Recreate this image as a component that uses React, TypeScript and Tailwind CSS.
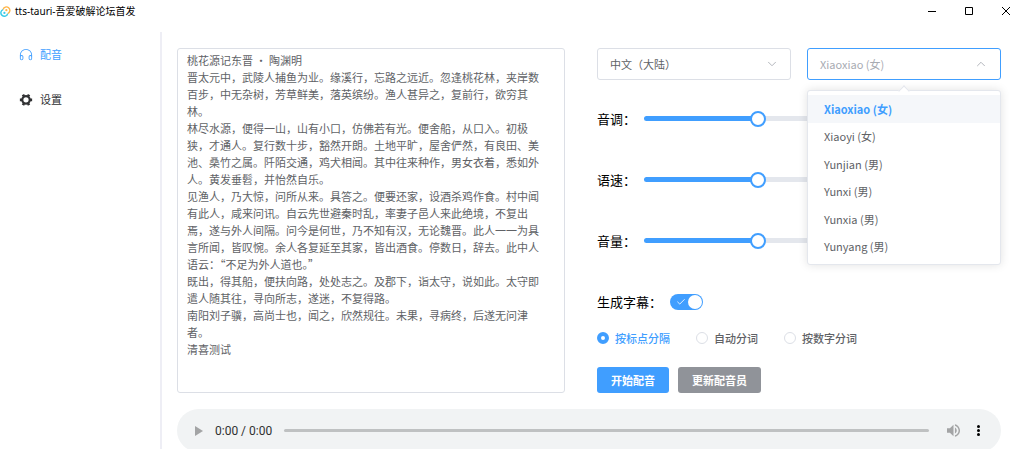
import { useState } from 'react';
import { Check, ChevronDown, ChevronUp } from 'lucide-react';

const article = `桃花源记东晋 · 陶渊明
晋太元中，武陵人捕鱼为业。缘溪行，忘路之远近。忽逢桃花林，夹岸数百步，中无杂树，芳草鲜美，落英缤纷。渔人甚异之，复前行，欲穷其林。
林尽水源，便得一山，山有小口，仿佛若有光。便舍船，从口入。初极狭，才通人。复行数十步，豁然开朗。土地平旷，屋舍俨然，有良田、美池、桑竹之属。阡陌交通，鸡犬相闻。其中往来种作，男女衣着，悉如外人。黄发垂髫，并怡然自乐。
见渔人，乃大惊，问所从来。具答之。便要还家，设酒杀鸡作食。村中闻有此人，咸来问讯。自云先世避秦时乱，率妻子邑人来此绝境，不复出焉，遂与外人间隔。问今是何世，乃不知有汉，无论魏晋。此人一一为具言所闻，皆叹惋。余人各复延至其家，皆出酒食。停数日，辞去。此中人语云：“不足为外人道也。”
既出，得其船，便扶向路，处处志之。及郡下，诣太守，说如此。太守即遣人随其往，寻向所志，遂迷，不复得路。
南阳刘子骥，高尚士也，闻之，欣然规往。未果，寻病终，后遂无问津者。
清喜测试`;

const voices = ['Xiaoxiao (女)', 'Xiaoyi (女)', 'Yunjian (男)', 'Yunxi (男)', 'Yunxia (男)', 'Yunyang (男)'];

const splitModes = ['按标点分隔', '自动分词', '按数字分词'];

const sliders = [
  { id: 'pitch', label: '音调：' },
  { id: 'rate', label: '语速：' },
  { id: 'volume', label: '音量：' },
];

function TauriLogo() {
  return (
    <svg viewBox="0 0 20 20" className="size-[11px]" fill="none">
      <path d="M5.5 6.5A6.3 6.3 0 1 1 14 13.8" stroke="#ffb547" strokeWidth="2.6" />
      <path d="M14 13.8A6.3 6.3 0 1 1 5.5 6.5" stroke="#3ccbe6" strokeWidth="2.6" />
      <circle cx="11.6" cy="7.6" r="2" fill="#ffb547" />
      <circle cx="8" cy="12.6" r="2" fill="#3ccbe6" />
    </svg>
  );
}

function HeadsetIcon() {
  return (
    <svg viewBox="0 0 1024 1024" className="size-[14px]" fill="currentColor">
      <path d="M896 529.152V512a384 384 0 1 0-768 0v17.152A128 128 0 0 1 320 640v128a128 128 0 1 1-256 0V512a448 448 0 1 1 896 0v256a128 128 0 1 1-256 0V640a128 128 0 0 1 192-110.848M896 640a64 64 0 0 0-128 0v128a64 64 0 0 0 128 0zm-768 0v128a64 64 0 0 0 128 0V640a64 64 0 1 0-128 0" />
    </svg>
  );
}

function ToolsIcon() {
  return (
    <svg viewBox="0 0 1024 1024" className="size-[14px]" fill="currentColor">
      <path d="M764.416 254.72a351.68 351.68 0 0 1 86.336 149.184H960v192.064H850.752a351.68 351.68 0 0 1-86.336 149.312l54.72 94.72-166.272 96-54.592-94.72a352.64 352.64 0 0 1-172.48 0L371.136 936l-166.272-96 54.72-94.72a351.68 351.68 0 0 1-86.336-149.312H64v-192h109.248a351.68 351.68 0 0 1 86.336-149.312L204.8 160l166.208-96h.192l54.656 94.592a352.64 352.64 0 0 1 172.48 0L652.8 64h.128L819.2 160l-54.72 94.72zM704 499.968a192 192 0 1 0-384 0 192 192 0 0 0 384 0" />
    </svg>
  );
}

function TitleBar() {
  return (
    <header className="flex h-8 shrink-0 items-start justify-between text-black">
      <div className="flex h-[22px] items-center gap-1">
        <TauriLogo />
        <h1 className="font-['Noto_Sans','Noto_Sans_CJK_SC',sans-serif] text-[10px]">tts-tauri-吾爱破解论坛首发</h1>
      </div>
      <div className="flex">
        <button aria-label="最小化" className="flex h-[22px] w-[37px] items-center justify-center">
          <svg viewBox="0 0 8 8" className="size-2" stroke="currentColor"><path d="M0 4.5h8" /></svg>
        </button>
        <button aria-label="最大化" className="flex h-[22px] w-[37px] items-center justify-center">
          <svg viewBox="0 0 8 8" className="size-2" stroke="currentColor" fill="none"><path d="M.5.5h7v7h-7z" /></svg>
        </button>
        <button aria-label="关闭" className="flex h-[22px] w-[37px] items-center justify-center">
          <svg viewBox="0 0 8 8" className="size-2" stroke="currentColor"><path d="M0 0l8 8M8 0L0 8" /></svg>
        </button>
      </div>
    </header>
  );
}

function Slider({ id, label }: { id: string; label: string }) {
  const [value, setValue] = useState(50);
  return (
    <div className="flex h-[61px] items-center gap-2">
      <label htmlFor={id} className="shrink-0 text-[13px] text-black">{label}</label>
      <input
        id={id}
        type="range"
        value={value}
        onChange={(e) => setValue(Number(e.target.value))}
        className="h-[5px] w-full max-w-[228px] appearance-none rounded-full [&::-webkit-slider-thumb]:size-4 [&::-webkit-slider-thumb]:appearance-none [&::-webkit-slider-thumb]:rounded-full [&::-webkit-slider-thumb]:border-2 [&::-webkit-slider-thumb]:border-[#409eff] [&::-webkit-slider-thumb]:bg-white"
        style={{ background: `linear-gradient(to right, #409eff ${value}%, #e4e7ed ${value}%)` }}
      />
    </div>
  );
}

function VoiceSelect() {
  const [voice, setVoice] = useState(voices[0]);
  return (
    <div className="relative">
      <button
        aria-haspopup="listbox"
        aria-expanded="true"
        aria-label="配音员"
        className="flex h-8 w-full items-center justify-between rounded-[3px] border border-[#409eff] px-3 text-[11px] text-[#a8abb2]"
      >
        {voice}
        <ChevronUp className="size-3.5 text-[#a8abb2]" strokeWidth={1.5} />
      </button>
      <div className="absolute top-[42px] left-0 z-10 w-full rounded-[3px] border border-[#e4e7ed] bg-white shadow-[0_0_10px_rgba(0,0,0,0.12)]">
        <span className="absolute -top-1 left-1/2 size-2 -translate-x-1/2 rotate-45 border-t border-l border-[#e4e7ed] bg-white" />
        <ul role="listbox" aria-label="配音员" className="relative grid min-h-[173px] grid-rows-6 py-1">
          {voices.map((v) => (
            <li
              key={v}
              role="option"
              aria-selected={v === voice}
              onClick={() => setVoice(v)}
              className={`flex items-center px-4 text-[11px] ${v === voice ? 'bg-[#f5f7fa] font-bold text-[#409eff]' : 'text-[#606266]'}`}
            >
              {v}
            </li>
          ))}
        </ul>
      </div>
    </div>
  );
}

function Player() {
  return (
    <div className="mt-4 flex h-[43px] shrink-0 items-center rounded-full bg-[#f1f3f4] pr-4 pl-[18px]">
      <button aria-label="播放" className="text-[#a3a4a5]">
        <svg viewBox="0 0 8 10" className="h-[10px] w-2" fill="currentColor"><path d="M0 0l8 5-8 5z" /></svg>
      </button>
      <span className="ml-3 font-[Roboto,sans-serif] text-[12px] text-[#2f3030]">0:00 / 0:00</span>
      <div className="mx-3 h-[3px] flex-1 rounded-full bg-[#bfc1c2]" />
      <button aria-label="静音" className="ml-1.5 text-[#a3a4a5]">
        <svg viewBox="3 3 18 18" className="size-[13px]" fill="currentColor">
          <path d="M3 9v6h4l5 5V4L7 9H3zm13.5 3c0-1.77-1.02-3.29-2.5-4.03v8.05c1.48-.73 2.5-2.25 2.5-4.02zM14 3.23v2.06c2.89.86 5 3.54 5 6.71s-2.11 5.85-5 6.71v2.06c4.01-.91 7-4.49 7-8.77s-2.99-7.86-7-8.77z" />
        </svg>
      </button>
      <button aria-label="更多选项" className="ml-3 text-black">
        <svg viewBox="0 0 13 13" className="size-[13px]" fill="currentColor">
          <circle cx="6.5" cy="2.5" r="1.5" />
          <circle cx="6.5" cy="6.5" r="1.5" />
          <circle cx="6.5" cy="10.5" r="1.5" />
        </svg>
      </button>
    </div>
  );
}

export default function App() {
  const [mode, setMode] = useState(splitModes[0]);

  return (
    <div lang="zh-CN" className="flex h-screen flex-col overflow-hidden bg-white font-['Noto_Sans_CJK_SC',sans-serif] text-[#303133]">
      <TitleBar />

      <div className="flex min-h-0 flex-1">
        {/* Sidebar */}
        <nav className="w-[162px] shrink-0 border-r-2 border-[#eeeef5] text-[11px]">
          <a href="#dub" className="flex h-[45px] items-center gap-[7px] pl-[19px] text-[#409eff]">
            <HeadsetIcon />
            配音
          </a>
          <a href="#settings" className="flex h-[45px] items-center gap-[7px] pl-[19px]">
            <ToolsIcon />
            设置
          </a>
        </nav>

        <main className="flex min-w-0 flex-1 flex-col pt-4 pr-[23px] pl-[15px]">
          <div className="grid shrink-0 grid-cols-[97fr_101fr] gap-8">
            <textarea
              aria-label="配音文本"
              defaultValue={article}
              spellCheck={false}
              className="resize-none overflow-hidden rounded-[3px] border border-[#dcdfe6] pt-[3px] pr-6 pl-[9px] text-[11px] leading-[17px] text-[#606266]"
            />

            <div>
              <div className="grid grid-cols-2 gap-4">
                <div className="relative">
                  <select
                    aria-label="语言"
                    className="h-8 w-full appearance-none rounded-[3px] border border-[#dcdfe6] px-3 text-[11px] text-[#606266]"
                  >
                    <option>中文（大陆）</option>
                  </select>
                  <ChevronDown className="pointer-events-none absolute top-[9px] right-3 size-3.5 text-[#a8abb2]" strokeWidth={1.5} />
                </div>
                <VoiceSelect />
              </div>

              {/* Voice settings */}
              <div className="mt-2">
                {sliders.map((s) => (
                  <Slider key={s.id} {...s} />
                ))}
                <label className="flex h-[61px] items-center gap-2 text-[13px] text-black">
                  生成字幕：
                  <span className="relative flex">
                    <input
                      type="checkbox"
                      role="switch"
                      defaultChecked
                      className="peer h-4 w-[33px] appearance-none rounded-full bg-[#dcdfe6] checked:bg-[#409eff]"
                    />
                    <Check className="pointer-events-none absolute top-[3px] left-1.5 size-2.5 text-white" strokeWidth={2} />
                    <span className="pointer-events-none absolute top-px left-px size-3.5 rounded-full bg-white peer-checked:left-[18px]" />
                  </span>
                </label>
              </div>

              <div className="flex h-3 items-center gap-[26px] text-[11px] font-medium">
                {splitModes.map((m) => (
                  <label key={m} className={`flex items-center gap-1.5 ${m === mode ? 'text-[#409eff]' : 'text-[#606266]'}`}>
                    <input
                      type="radio"
                      name="split"
                      checked={m === mode}
                      onChange={() => setMode(m)}
                      className="size-3 appearance-none rounded-full border border-[#dcdfe6] checked:border-4 checked:border-[#409eff]"
                    />
                    {m}
                  </label>
                ))}
              </div>

              <div className="mt-[23px] flex gap-[9px] text-[11px] font-bold text-white">
                <button className="h-[26px] rounded-[3px] bg-[#409eff] px-3.5">开始配音</button>
                <button className="h-[26px] rounded-[3px] bg-[#909399] px-3.5">更新配音员</button>
              </div>
            </div>
          </div>

          <Player />
        </main>
      </div>
    </div>
  );
}
